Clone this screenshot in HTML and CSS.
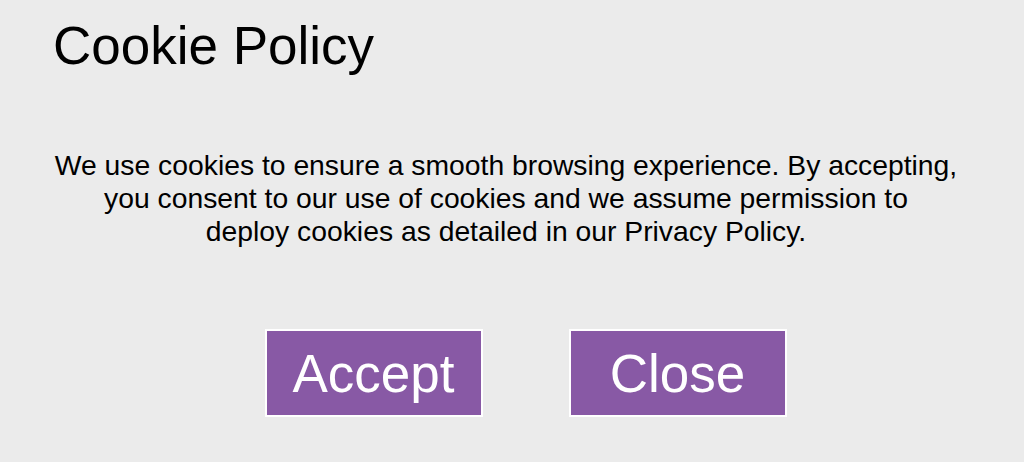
FILE: index.html
```html
<!DOCTYPE html>
<html lang="en">
<head>
    <meta charset="UTF-8">
    <title>Cookie Policy</title>
    <link rel="stylesheet" href="styles.css">
</head>
<body>
    <div class="cookie-box">
        <h1 class="title">Cookie Policy</h1>
        <p class="text">We use cookies to ensure a smooth browsing experience. By accepting,<br>
            you consent to our use of cookies and we assume permission to<br>
            deploy cookies as detailed in our Privacy Policy.</p>
        <div class="actions">
            <button class="btn" type="button">Accept</button>
            <button class="btn" type="button">Close</button>
        </div>
    </div>
</body>
</html>
```

FILE: styles.css
```css
html, body { margin: 0; padding: 0; background: #ebebeb; }
body { font-family: "Liberation Sans", Arial, sans-serif; color: #000; height: 462px; overflow: hidden; }
.cookie-box { padding: 16px 0 0 0; }
.title { margin: 0 0 0 53px; font-size: 53px; font-weight: normal; line-height: 60px; }
.text { margin: 73px 0 0 0; padding: 0 12px 0 0; font-size: 28.3px; line-height: 33px; text-align: center; }
.actions { display: flex; justify-content: center; gap: 86px; margin-top: 81px; padding-left: 27px; }
.btn { box-sizing: border-box; width: 218px; height: 88px; background: #8859a5; color: #fff; border: 2px solid #fff; font-family: inherit; font-size: 53px; line-height: 1; padding: 0; }
```
